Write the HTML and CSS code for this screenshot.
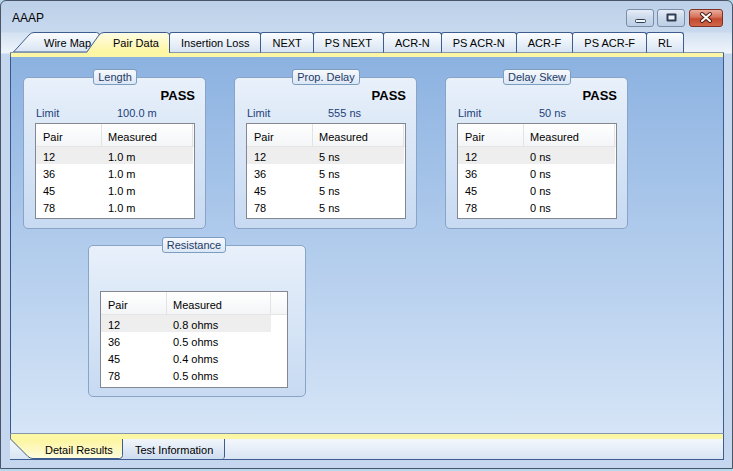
FILE: index.html
```html
<!DOCTYPE html>
<html>
<head>
<meta charset="utf-8">
<title>AAAP</title>
<link rel="stylesheet" href="styles.css">
</head>
<body>
<div class="window">
  <div class="titlebar">
    <span class="title">AAAP</span>
    <div class="caption-buttons">
      <div class="cbtn cbtn-min">
        <svg width="26" height="16" viewBox="0 0 26 16"><rect x="8.5" y="9.5" width="10" height="3" rx="1" fill="#f3f6fa" stroke="#2f3d52"/></svg>
      </div>
      <div class="cbtn cbtn-max">
        <svg width="26" height="16" viewBox="0 0 26 16"><rect x="8.5" y="3.5" width="10" height="8" rx="1" fill="#2f3d52"/><rect x="10.5" y="5.5" width="6" height="4" fill="#eef3f9"/></svg>
      </div>
      <div class="cbtn cbtn-close">
        <svg width="32" height="16" viewBox="0 0 32 16"><path d="M12 4 L20 11 M20 4 L12 11" stroke="#4a1a10" stroke-width="4" stroke-linecap="round"/><path d="M12 4 L20 11 M20 4 L12 11" stroke="#ffffff" stroke-width="2" stroke-linecap="round"/></svg>
      </div>
    </div>
  </div>

  <div class="client">
    <div class="tabs-top">
      <div class="tabs-lead"></div>
      <div class="stab stab-wire">
        <svg class="stab-shape" width="87" height="20" viewBox="0 0 87 20">
          <defs><linearGradient id="gw" x1="0" y1="0" x2="0" y2="1"><stop offset="0" stop-color="#fbfdff"/><stop offset="1" stop-color="#d8e4f3"/></linearGradient></defs>
          <path d="M0.5 20 L16 3 Q18 0.5 21 0.5 L83.5 0.5 Q86.5 0.5 86.5 3.5 L86.5 20 Z" fill="url(#gw)" stroke="#3d5c8f"/>
        </svg>
        <span class="stab-label stab-label-wire">Wire Map</span>
      </div>
      <div class="stab stab-pair">
        <svg class="stab-shape" width="84" height="21" viewBox="0 0 84 21">
          <defs><linearGradient id="gp" x1="0" y1="0" x2="0" y2="1"><stop offset="0" stop-color="#fffde6"/><stop offset="1" stop-color="#fcf59f"/></linearGradient></defs>
          <path d="M0 21 L0.5 20 L13 3 Q15 0.5 18 0.5 L80.5 0.5 Q83.5 0.5 83.5 3.5 L83.5 21 Z" fill="url(#gp)"/>
          <path d="M0.5 20.5 L13 3 Q15 0.5 18 0.5 L80.5 0.5 Q83.5 0.5 83.5 3.5 L83.5 21" fill="none" stroke="#3d5c8f"/>
        </svg>
        <span class="stab-label stab-label-pair">Pair Data</span>
      </div>
      <div class="ttab">Insertion Loss</div>
      <div class="ttab">NEXT</div>
      <div class="ttab">PS NEXT</div>
      <div class="ttab">ACR-N</div>
      <div class="ttab">PS ACR-N</div>
      <div class="ttab">ACR-F</div>
      <div class="ttab">PS ACR-F</div>
      <div class="ttab">RL</div>
      <div class="tabs-fill"></div>
    </div>
    <div class="stripe stripe-top"></div>

    <div class="panel">
      <div class="group-row">
        <section class="group">
          <div class="legend">Length</div>
          <div class="verdict">PASS</div>
          <div class="limit"><span class="limit-label">Limit</span><span>100.0 m</span></div>
          <div class="list">
            <div class="list-head"><div class="cell c1">Pair</div><div class="cell c2">Measured</div></div>
            <div class="list-row sel"><div class="cell c1">12</div><div class="cell c2">1.0 m</div></div>
            <div class="list-row"><div class="cell c1">36</div><div class="cell c2">1.0 m</div></div>
            <div class="list-row"><div class="cell c1">45</div><div class="cell c2">1.0 m</div></div>
            <div class="list-row"><div class="cell c1">78</div><div class="cell c2">1.0 m</div></div>
          </div>
        </section>
        <section class="group">
          <div class="legend">Prop. Delay</div>
          <div class="verdict">PASS</div>
          <div class="limit"><span class="limit-label">Limit</span><span>555 ns</span></div>
          <div class="list">
            <div class="list-head"><div class="cell c1">Pair</div><div class="cell c2">Measured</div></div>
            <div class="list-row sel"><div class="cell c1">12</div><div class="cell c2">5 ns</div></div>
            <div class="list-row"><div class="cell c1">36</div><div class="cell c2">5 ns</div></div>
            <div class="list-row"><div class="cell c1">45</div><div class="cell c2">5 ns</div></div>
            <div class="list-row"><div class="cell c1">78</div><div class="cell c2">5 ns</div></div>
          </div>
        </section>
        <section class="group">
          <div class="legend">Delay Skew</div>
          <div class="verdict">PASS</div>
          <div class="limit"><span class="limit-label">Limit</span><span>50 ns</span></div>
          <div class="list">
            <div class="list-head"><div class="cell c1">Pair</div><div class="cell c2">Measured</div></div>
            <div class="list-row sel"><div class="cell c1">12</div><div class="cell c2">0 ns</div></div>
            <div class="list-row"><div class="cell c1">36</div><div class="cell c2">0 ns</div></div>
            <div class="list-row"><div class="cell c1">45</div><div class="cell c2">0 ns</div></div>
            <div class="list-row"><div class="cell c1">78</div><div class="cell c2">0 ns</div></div>
          </div>
        </section>
      </div>
      <div class="group-row group-row-second">
        <section class="group group-wide">
          <div class="legend">Resistance</div>
          <div class="list list-wide">
            <div class="list-head"><div class="cell c1">Pair</div><div class="cell c2w">Measured</div></div>
            <div class="list-row sel"><div class="cell c1">12</div><div class="cell c2w">0.8 ohms</div></div>
            <div class="list-row"><div class="cell c1">36</div><div class="cell c2w">0.5 ohms</div></div>
            <div class="list-row"><div class="cell c1">45</div><div class="cell c2w">0.4 ohms</div></div>
            <div class="list-row"><div class="cell c1">78</div><div class="cell c2w">0.5 ohms</div></div>
          </div>
        </section>
      </div>
    </div>

    <div class="stripe stripe-bottom"></div>
    <div class="tabs-bottom">
      <div class="stab stab-detail">
        <svg class="stab-shape" width="113" height="20" viewBox="0 0 113 20">
          <defs><linearGradient id="gd" x1="0" y1="0" x2="0" y2="1"><stop offset="0" stop-color="#fcf59f"/><stop offset="1" stop-color="#fffce0"/></linearGradient></defs>
          <path d="M0 0 L18 17.5 Q20 20 23 20 L109.5 20 Q112.5 20 112.5 17 L112.5 0 Z" fill="url(#gd)"/>
          <path d="M0.5 0 L18 17.5 Q20 19.5 23 19.5 L109.5 19.5 Q112.5 19.5 112.5 16.5 L112.5 0" fill="none" stroke="#3d5c8f"/>
        </svg>
        <span class="stab-label stab-label-detail">Detail Results</span>
      </div>
      <div class="btab">Test Information</div>
      <div class="tabs-fill-bottom"></div>
    </div>
  </div>
</div>
</body>
</html>
```

FILE: styles.css
```css
* { box-sizing: border-box; }

html, body {
  margin: 0;
  padding: 0;
}

body {
  width: 733px;
  height: 471px;
  overflow: hidden;
  background: #b4d8ec;
  font-family: "Liberation Sans", Arial, sans-serif;
  font-size: 11px;
  color: #000;
}

.window {
  width: 733px;
  height: 469px;
  border: 1px solid #4a5568;
  border-radius: 6px 6px 0 0;
  padding: 0 8px 0 9px;
  display: flex;
  flex-direction: column;
  background: linear-gradient(to bottom,
    #bcd0e9 0px, #c8d9ee 31px, #d5e2f2 32px, #eef4fb 52px,
    #c4d7ee 53px, #c4d7ee 100%);
}

/* ---------- title bar ---------- */
.titlebar {
  height: 31px;
  flex: none;
  display: flex;
  align-items: flex-start;
}

.title {
  margin: 10px 0 0 2px;
  font-size: 12px;
  line-height: 14px;
}

.caption-buttons {
  margin: 8px 1px 0 auto;
  display: flex;
}

.cbtn {
  height: 18px;
  border: 1px solid #7b8ca6;
  border-radius: 3px;
  background: linear-gradient(#e6edf6, #cbd9eb 50%, #bccfe6);
  display: flex;
  align-items: center;
  justify-content: center;
}

.cbtn svg { display: block; }

.cbtn-min { width: 28px; }
.cbtn-max { width: 28px; margin-left: 3px; }
.cbtn-close {
  width: 34px;
  margin-left: 4px;
  border-color: #7e3223;
  background: linear-gradient(#e9ad9c, #d4705a 45%, #c54a2f 55%, #d0674a);
}

/* ---------- client ---------- */
.client {
  flex: 1;
  display: flex;
  flex-direction: column;
}

/* top tab strip */
.tabs-top {
  height: 21px;
  flex: none;
  display: flex;
}

.tabs-lead {
  width: 3px;
  border-bottom: 1px solid #8796ab;
}

.tabs-fill {
  flex: 1;
  border-bottom: 1px solid #8796ab;
}

.ttab {
  height: 21px;
  margin-left: -1px;
  padding: 1px 11px 0;
  line-height: 18px;
  white-space: nowrap;
  border: 1px solid #3d5c8f;
  border-bottom-color: #8796ab;
  border-radius: 3px 3px 0 0;
  background: linear-gradient(#fbfdff, #d8e4f3);
}

.stab {
  display: grid;
  white-space: nowrap;
}

.stab-shape,
.stab-label {
  grid-area: 1 / 1;
}

.stab-shape { display: block; }

.stab-label {
  align-self: start;
  line-height: 18px;
}

.stab-wire {
  width: 87px;
  height: 21px;
  border-bottom: 1px solid #8796ab;
}

.stab-label-wire { padding: 2px 0 0 31px; }

.stab-pair {
  width: 84px;
  height: 21px;
  margin-left: -14px;
}

.stab-label-pair { padding: 2px 0 0 27px; }

/* yellow stripes */
.stripe {
  flex: none;
  background: #fcf7a4;
  border-left: 1px solid #5d7398;
  border-right: 1px solid #3d5c8f;
}

.stripe-top { height: 4px; }

.stripe-bottom {
  height: 6px;
  border-top: 1px solid #8796ab;
}

/* ---------- main panel ---------- */
.panel {
  height: 376px;
  flex: none;
  border-left: 1px solid #34598f;
  border-right: 1px solid #3d5c8f;
  background: linear-gradient(#8cb2e1, #d6e5f7);
  padding: 20px 0 0 12px;
  display: flex;
  flex-direction: column;
}

.group-row {
  display: flex;
  gap: 28px;
}

.group-row-second {
  margin-top: 16px;
  padding-left: 65px;
}

.group {
  width: 183px;
  height: 152px;
  border: 1px solid #8aa4c8;
  border-radius: 5px;
  background: linear-gradient(#e8f0fa, #c7daf2);
  padding: 0 10px 0 11px;
  display: flex;
  flex-direction: column;
}

.group-wide {
  width: 218px;
  padding-right: 17px;
}

.legend {
  align-self: center;
  margin-top: -9px;
  height: 16px;
  padding: 0 4px;
  line-height: 14px;
  color: #1e3a66;
  border: 1px solid #7c9dc2;
  border-radius: 3px;
  background: linear-gradient(#f6f9fd, #dce7f5);
  white-space: nowrap;
}

.verdict {
  margin-top: 3px;
  text-align: right;
  font-weight: bold;
  font-size: 13px;
  line-height: 16px;
}

.limit {
  margin-top: 3px;
  padding-left: 1px;
  display: flex;
  line-height: 13px;
  color: #223f7a;
}

.limit-label { width: 81px; }

/* list views */
.list {
  margin-top: 3px;
  height: 96px;
  border: 1px solid #828790;
  background: #fff;
  overflow: hidden;
}

.list-wide {
  margin-top: 38px;
  height: 97px;
}

.list-head {
  height: 23px;
  display: flex;
  border-bottom: 1px solid #e5e5e5;
  background: linear-gradient(#ffffff, #f4f5f7);
}

.list-head .cell {
  padding-top: 7px;
  line-height: 13px;
  border-right: 1px solid #e3e3e3;
}

.list-row {
  width: max-content;
  height: 17px;
  display: flex;
}

.list-row .cell {
  padding-top: 3px;
  line-height: 14px;
}

.list-row.sel { background: #eeeeee; }

.cell { white-space: nowrap; }
.c1 { width: 66px; padding-left: 7px; }
.c2 { width: 91px; padding-left: 6px; }
.c2w { width: 104px; padding-left: 6px; }

/* bottom tab strip */
.tabs-bottom {
  height: 21px;
  flex: none;
  display: flex;
  background: linear-gradient(#f3f7fc, #d9e5f4);
  border-right: 1px solid #3d5c8f;
  border-bottom: 1px solid #3d5c8f;
}

.stab-detail {
  width: 113px;
  height: 20px;
}

.stab-label-detail { padding: 3px 0 0 35px; line-height: 17px; }

.btab {
  height: 20px;
  padding: 3px 11px 0 12px;
  line-height: 17px;
  white-space: nowrap;
  border-right: 1px solid #3d5c8f;
  border-radius: 0 0 3px 0;
  background: linear-gradient(#f2f6fb, #cddcf0);
}

.tabs-fill-bottom { flex: 1; }
```
